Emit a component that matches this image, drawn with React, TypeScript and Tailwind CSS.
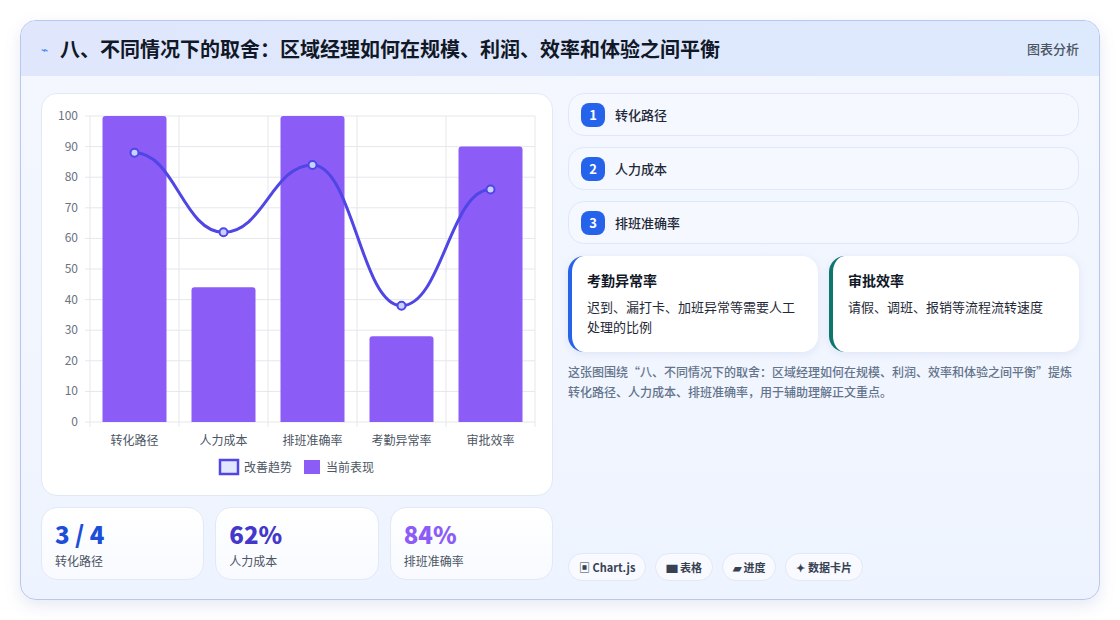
import React from "react";

const cats = ["转化路径", "人力成本", "排班准确率", "考勤异常率", "审批效率"];
const bars = [100, 44, 100, 28, 90];
const line = [88, 62, 84, 38, 76];
const X0 = 88, X1 = 533, Y0 = 421, Y1 = 115;
const cw = (X1 - X0) / 5;
const yv = (v: number) => Y0 - ((Y0 - Y1) * v) / 100;
const cx = (i: number) => X0 + cw * (i + 0.5);

function Chart() {
  const pts = line.map((v, i) => [cx(i), yv(v)]);
  let d = `M${pts[0][0]},${pts[0][1]}`;
  for (let i = 0; i < pts.length - 1; i++) {
    const [x1, y1] = pts[i], [x2, y2] = pts[i + 1];
    const dx = (x2 - x1) * 0.45;
    d += ` C${x1 + dx},${y1} ${x2 - dx},${y2} ${x2},${y2}`;
  }
  return (
    <svg width="512" height="403" viewBox="40 93 512 403" className="block">
      {[0, 10, 20, 30, 40, 50, 60, 70, 80, 90, 100].map((v) => (
        <g key={v}>
          <line x1={X0 - 5} x2={X1} y1={yv(v)} y2={yv(v)} stroke="#e5e7eb" />
          <text x={X0 - 12} y={yv(v) + 4} textAnchor="end" fontSize="12" fill="#6b7280">{v}</text>
        </g>
      ))}
      {[0, 1, 2, 3, 4, 5].map((i) => (
        <line key={i} x1={X0 + cw * i} x2={X0 + cw * i} y1={Y1} y2={Y0 + 5} stroke="#e5e7eb" />
      ))}
      {bars.map((v, i) => (
        <path key={i} d={`M${cx(i) - 32},${Y0} V${yv(v) + 3} q0,-3 3,-3 h58 q3,0 3,3 V${Y0} Z`} fill="#8b5cf6" />
      ))}
      <path d={d} fill="none" stroke="#4f46e5" strokeWidth="3" />
      {pts.map(([x, y], i) => (
        <circle key={i} cx={x} cy={y} r="4" fill="#c7d2fe" stroke="#4f46e5" strokeWidth="2" />
      ))}
      {cats.map((c, i) => (
        <text key={c} x={cx(i)} y={444} textAnchor="middle" fontSize="12" fill="#4b5563">{c}</text>
      ))}
      <rect x="218" y="459" width="18" height="14" fill="#e0e7ff" stroke="#4f46e5" strokeWidth="2.5" />
      <text x="242" y="471" fontSize="12" fill="#4b5563">改善趋势</text>
      <rect x="302" y="459" width="16" height="14" fill="#8b5cf6" />
      <text x="324" y="471" fontSize="12" fill="#4b5563">当前表现</text>
    </svg>
  );
}

export default function App() {
  const font = { fontFamily: '"Noto Sans CJK SC", "Noto Sans", sans-serif' };
  return (
    <div className="w-[1120px] h-[620px] bg-white p-5 pb-5" style={font}>
      <div className="h-[580px] rounded-2xl border border-[#b9c6ef] bg-gradient-to-b from-[#f4f7fe] to-[#eef4ff] overflow-hidden shadow-[0_6px_16px_rgba(100,116,180,0.15)] flex flex-col">
        <div className="h-[55px] shrink-0 bg-gradient-to-r from-[#e0e7fd] to-[#dde9fd] flex items-center px-5 justify-between">
          <div className="flex items-center gap-3">
            <span className="text-[#3b82f6] text-xs">⌁</span>
            <span className="text-[20px] font-bold text-[#111827]">八、不同情况下的取舍：区域经理如何在规模、利润、效率和体验之间平衡</span>
          </div>
          <span className="text-[13px] text-[#4b5563] font-medium">图表分析</span>
        </div>
        <div className="flex gap-[15px] px-5 pt-[17px]">
          <div className="w-[512px] flex flex-col gap-[11px]">
            <div className="h-[403px] rounded-2xl bg-white border border-[#e2e8f5] overflow-hidden">
              <Chart />
            </div>
            <div className="grid grid-cols-3 gap-[11px]">
              {[
                ["3 / 4", "转化路径", "text-[#1d4ed8]"],
                ["62%", "人力成本", "text-[#4338ca]"],
                ["84%", "排班准确率", "text-[#8b5cf6]"],
              ].map(([v, l, c]) => (
                <div key={l} className="h-[73px] rounded-2xl bg-gradient-to-b from-white to-[#f8faff] border border-[#e2e8f5] px-[13px] pt-[10px]">
                  <div className={`text-[24px] font-black leading-[32px] ${c}`}>{v}</div>
                  <div className="text-[12px] text-[#4b5563] mt-[2px]">{l}</div>
                </div>
              ))}
            </div>
          </div>
          <div className="w-[513px] flex flex-col">
            {["转化路径", "人力成本", "排班准确率"].map((t, i) => (
              <div key={t} className="h-[43px] mb-[11px] rounded-2xl bg-[#f5f8ff] border border-[#dfe7fa] flex items-center px-3 gap-[10px]">
                <span className="w-6 h-6 rounded-lg bg-[#2563eb] text-white text-[13px] font-bold flex items-center justify-center">{i + 1}</span>
                <span className="text-[13px] font-medium text-[#1f2937]">{t}</span>
              </div>
            ))}
            <div className="grid grid-cols-2 gap-[11px] mt-[1px]">
              <div className="h-[96px] rounded-2xl bg-white border-l-4 border-[#2563eb] shadow-[0_2px_8px_rgba(100,116,180,0.12)] px-[15px] pt-[14px]">
                <div className="text-[14px] font-bold text-[#111827]">考勤异常率</div>
                <div className="text-[13px] text-[#1f2937] mt-[6px] leading-[20px]">迟到、漏打卡、加班异常等需要人工处理的比例</div>
              </div>
              <div className="h-[96px] rounded-2xl bg-white border-l-4 border-[#0f766e] shadow-[0_2px_8px_rgba(100,116,180,0.12)] px-[15px] pt-[14px]">
                <div className="text-[14px] font-bold text-[#111827]">审批效率</div>
                <div className="text-[13px] text-[#1f2937] mt-[6px] leading-[20px]">请假、调班、报销等流程流转速度</div>
              </div>
            </div>
            <div className="text-[12px] text-[#64748b] leading-[20px] mt-[10px] font-medium">这张图围绕“八、不同情况下的取舍：区域经理如何在规模、利润、效率和体验之间平衡”提炼转化路径、人力成本、排班准确率，用于辅助理解正文重点。</div>
            <div className="flex gap-[9px] mt-[151px]">
              {["▣ Chart.js", "▆ 表格", "▰ 进度", "✦ 数据卡片"].map((t) => (
                <span key={t} className="h-[28px] px-[10px] rounded-full bg-[#f8faff] border border-[#e2e8f5] text-[11px] font-bold text-[#374151] flex items-center">{t}</span>
              ))}
            </div>
          </div>
        </div>
      </div>
    </div>
  );
}
